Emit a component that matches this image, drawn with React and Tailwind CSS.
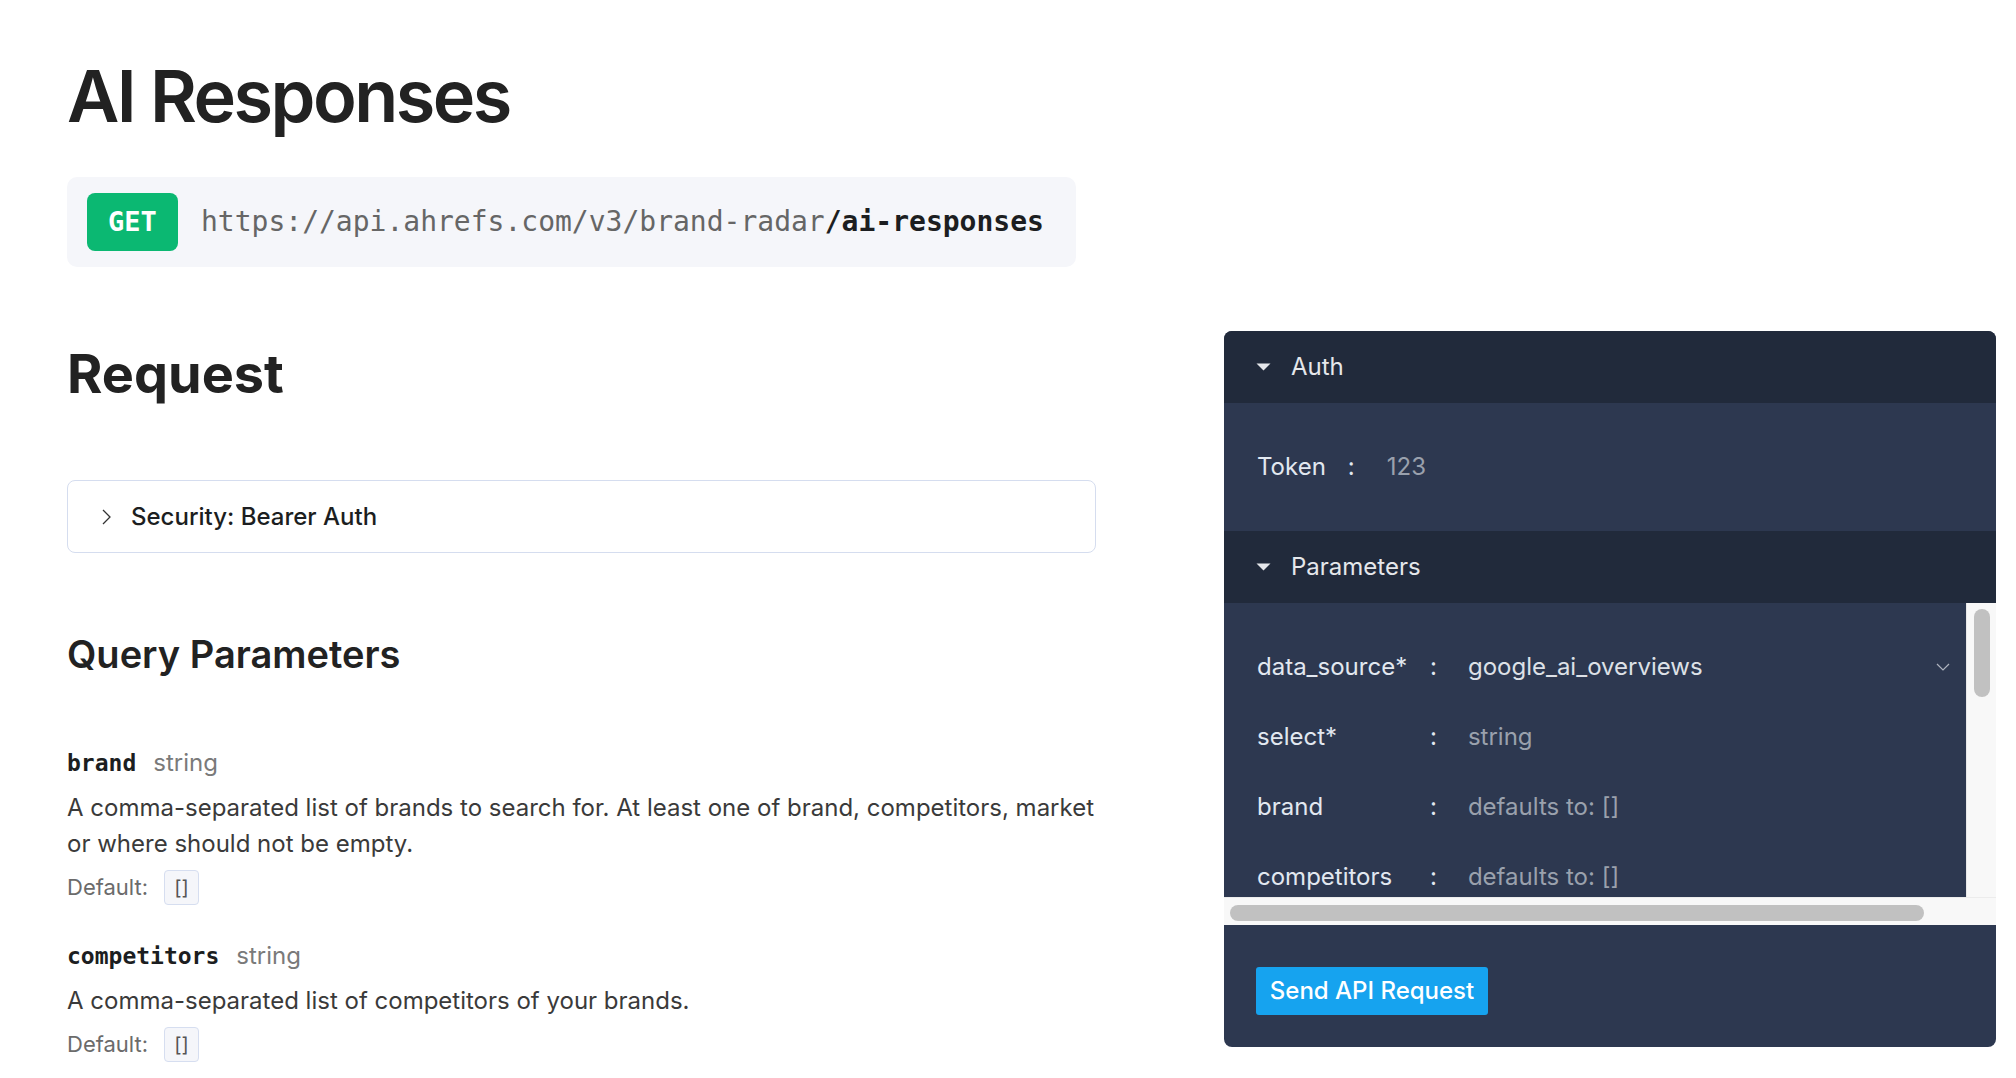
import React from "react";

const mono = "font-['DejaVu_Sans_Mono','Liberation_Mono',monospace]";

function Caret() {
  return (
    <svg width="15" height="8" viewBox="0 0 15 8" className="shrink-0">
      <path d="M0.5 0.5 L14.5 0.5 L7.5 7.5 Z" fill="#e5e7eb" />
    </svg>
  );
}

function ParamDoc({ name, desc, top }) {
  return (
    <div className={top}>
      <div className="flex items-baseline">
        <span className={`${mono} text-[23px] font-bold text-[#1c1e21]`}>{name}</span>
        <span className="ml-[17px] text-[24px] text-[#7a7a7a]">string</span>
      </div>
      <p className="mt-[9px] text-[24px] leading-[36px] text-[#3a3a3a]">{desc}</p>
      <div className="mt-[8px] flex items-center">
        <span className="text-[22px] text-[#6b6b6b]">Default:</span>
        <span className="ml-[16px] flex h-[35px] w-[35px] items-center justify-center rounded-[4px] border border-[#d6def0] bg-[#f5f6fa] text-[20px] text-[#555]">
          []
        </span>
      </div>
    </div>
  );
}

function PanelRow({ label, value, muted, select }) {
  return (
    <div className="flex h-[70px] items-center text-[24px]">
      <span className="w-[173px] shrink-0 text-[#e2e8f0]">{label}</span>
      <span className="text-[#e2e8f0]">:</span>
      <span className={`ml-[31px] flex-1 ${muted ? "text-[#9aa1ad]" : "text-[#dde1e7]"}`}>{value}</span>
      {select && (
        <svg width="14" height="8" viewBox="0 0 14 8" className="mr-[16px] shrink-0">
          <path d="M1 1 L7 7 L13 1" fill="none" stroke="#aeb4bf" strokeWidth="1.2" />
        </svg>
      )}
    </div>
  );
}

export default function App() {
  return (
    <div className="min-h-screen bg-white font-['Inter','Noto_Sans',sans-serif] text-[#1c1e21]">
      <div className="flex items-start">
        <main className="ml-[67px] w-[1033px] shrink-0">
          <h1 className="mt-[60px] text-[72px] leading-[72px] font-semibold tracking-[-0.035em] text-[#222]">
            AI Responses
          </h1>

          <div className="mt-[45px] flex h-[90px] w-[1009px] items-center rounded-[10px] bg-[#f5f6fa] pl-[20px]">
            <span className={`${mono} flex h-[58px] w-[91px] items-center justify-center rounded-[8px] bg-[#0bb872] text-[27px] font-bold text-white`}>
              GET
            </span>
            <span className={`${mono} ml-[23px] text-[28px] text-[#666]`}>
              https://api.ahrefs.com/v3/brand-radar
              <b className="text-[#1c1e21]">/ai-responses</b>
            </span>
          </div>

          <h2 className="mt-[81px] text-[54px] leading-[52px] font-bold text-[#222]">Request</h2>

          <div className="mt-[80px] flex h-[73px] w-[1029px] items-center rounded-[8px] border-[1.5px] border-[#d5ddef] pl-[34px]">
            <svg width="9" height="16" viewBox="0 0 9 16" className="shrink-0">
              <path d="M1 1 L8 8 L1 15" fill="none" stroke="#333" strokeWidth="1.3" />
            </svg>
            <span className="ml-[20px] text-[24px] font-medium text-[#1c1e21]">Security: Bearer Auth</span>
          </div>

          <h3 className="mt-[82px] text-[38px] leading-[38px] font-semibold text-[#222]">Query Parameters</h3>

          <ParamDoc
            top="mt-[72px]"
            name="brand"
            desc="A comma-separated list of brands to search for. At least one of brand, competitors, market or where should not be empty."
          />
          <ParamDoc
            top="mt-[33px]"
            name="competitors"
            desc="A comma-separated list of competitors of your brands."
          />
        </main>

        <aside className="ml-[124px] mt-[331px] w-[772px] shrink-0 self-start overflow-hidden rounded-[8px] bg-[#2d3850]">
          <div className="flex h-[72px] items-center bg-[#212a3b] pl-[32px] text-[24px] text-[#e5e7eb]">
            <Caret />
            <span className="ml-[20px]">Auth</span>
          </div>
          <div className="flex h-[128px] items-center pl-[33px] text-[24px]">
            <span className="text-[#e2e8f0]">Token</span>
            <span className="ml-[22px] text-[#e2e8f0]">:</span>
            <span className="ml-[32px] text-[#9aa1ad]">123</span>
          </div>
          <div className="flex h-[72px] items-center bg-[#212a3b] pl-[32px] text-[24px] text-[#e5e7eb]">
            <Caret />
            <span className="ml-[20px]">Parameters</span>
          </div>

          <div className="flex h-[294px]">
            <div className="flex-1 overflow-hidden pl-[33px] pt-[29px]">
              <PanelRow label="data_source*" value="google_ai_overviews" select />
              <PanelRow label="select*" value="string" muted />
              <PanelRow label="brand" value="defaults to: []" muted />
              <PanelRow label="competitors" value="defaults to: []" muted />
            </div>
            <div className="w-[30px] shrink-0 border-l border-[#e8e8e8] bg-[#f8f8f8] pl-[7px] pt-[6px]">
              <div className="h-[88px] w-[16px] rounded-full bg-[#c1c1c1]" />
            </div>
          </div>
          <div className="h-[28px] border-t border-[#ececec] bg-[#f8f8f8] pl-[6px] pt-[7px]">
            <div className="h-[16px] w-[694px] rounded-full bg-[#c1c1c1]" />
          </div>

          <div className="h-[122px] pl-[32px] pt-[42px]">
            <button className="h-[48px] w-[232px] rounded-[3px] bg-[#16a3ef] text-[24px] font-medium text-white">
              Send API Request
            </button>
          </div>
        </aside>
      </div>
    </div>
  );
}
